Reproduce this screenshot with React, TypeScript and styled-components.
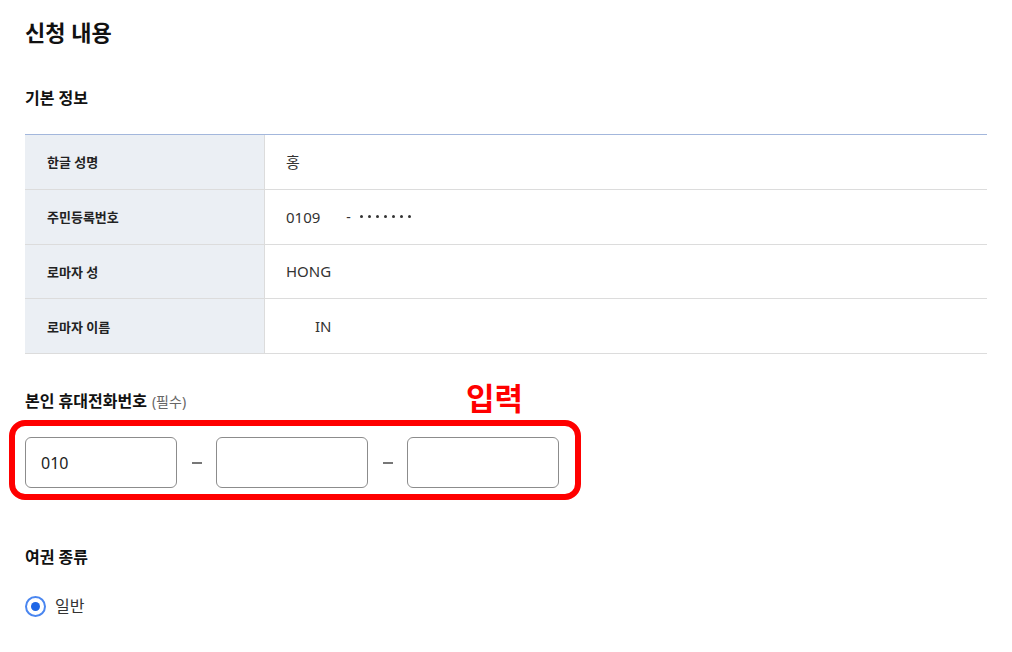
import React from "react";
import styled, { createGlobalStyle } from "styled-components";

const GlobalStyle = createGlobalStyle`
  html, body {
    margin: 0;
    padding: 0;
    background: #ffffff;
    font-family: "Noto Sans", "Noto Sans CJK KR", sans-serif;
    color: #222;
  }
  * { box-sizing: border-box; }
`;

const Page = styled.div`
  padding: 17px 25px 40px 25px;
  display: flex;
  flex-direction: column;
`;

const Title = styled.h2`
  margin: 0;
  font-size: 22px;
  line-height: 30px;
  font-weight: 700;
  color: #111;
`;

const SectionTitle = styled.h3<{ $mt: number }>`
  margin: ${(p) => p.$mt}px 0 0 0;
  font-size: 16px;
  line-height: 24px;
  font-weight: 700;
  color: #111;
`;

const InfoTable = styled.div`
  margin-top: 24px;
  border-top: 1px solid #a3b7dc;
  display: flex;
  flex-direction: column;
`;

const Row = styled.div`
  display: grid;
  grid-template-columns: 240px 1fr;
  height: 54.75px;
  border-bottom: 1px solid #dcdcdc;
`;

const LabelCell = styled.div`
  background: #ebeff4;
  border-right: 1px solid #dcdcdc;
  display: flex;
  align-items: center;
  padding-left: 22px;
  font-size: 13px;
  font-weight: 700;
  color: #222;
`;

const ValueCell = styled.div<{ $indent?: number }>`
  display: flex;
  align-items: center;
  padding-left: ${(p) => 21 + (p.$indent ?? 0)}px;
  font-size: 15px;
  color: #333;
`;

const Masked = styled.span`
  margin-left: 26px;
  display: inline-flex;
  align-items: center;
  gap: 5px;
`;

const Dot = styled.span`
  width: 3px;
  height: 3px;
  border-radius: 50%;
  background: #333;
`;

const Hyphen = styled.span`
  margin-right: 4px;
  font-size: 14px;
`;

const FieldLabel = styled.div`
  margin-top: 36px;
  display: flex;
  align-items: baseline;
  gap: 5px;
  font-size: 16px;
  line-height: 22px;
  font-weight: 700;
  color: #111;
`;

const Required = styled.span`
  font-size: 14px;
  font-weight: 400;
  color: #666;
`;

const Annotated = styled.div`
  position: relative;
  margin-top: 24px;
  width: 535px;
`;

const Highlight = styled.div`
  position: absolute;
  top: -17px;
  left: -16px;
  right: -21px;
  bottom: -12px;
  border: 6px solid #ff0000;
  border-radius: 16px;
  pointer-events: none;
`;

const Note = styled.span`
  position: absolute;
  top: -58px;
  left: 441px;
  font-family: "Noto Sans CJK KR", sans-serif;
  font-size: 31px;
  line-height: 36px;
  font-weight: 700;
  color: #ff0000;
  letter-spacing: 0;
  white-space: nowrap;
`;

const PhoneRow = styled.div`
  display: flex;
  align-items: center;
`;

const PhoneInput = styled.input`
  width: 152px;
  height: 51px;
  border: 1px solid #8c8c8c;
  border-radius: 6px;
  padding: 0 15px;
  font-family: "Noto Sans", "Noto Sans CJK KR", sans-serif;
  font-size: 16px;
  color: #222;
  background: #fff;
  outline: none;
`;

const Dash = styled.span`
  width: 39px;
  display: flex;
  justify-content: center;
  &::before {
    content: "";
    display: block;
    width: 10px;
    height: 2px;
    background: #777;
  }
`;

const RadioRow = styled.label`
  margin-top: 25px;
  display: flex;
  align-items: center;
  gap: 9px;
  font-size: 16px;
  line-height: 24px;
  color: #333;
`;

const RadioOuter = styled.span`
  width: 21px;
  height: 21px;
  border-radius: 50%;
  border: 2px solid #4a86f0;
  display: flex;
  align-items: center;
  justify-content: center;
  &::after {
    content: "";
    width: 9px;
    height: 9px;
    border-radius: 50%;
    background: #1e66e6;
  }
`;

const rows: { label: string; value: React.ReactNode; indent?: number }[] = [
  { label: "한글 성명", value: "홍" },
  {
    label: "주민등록번호",
    value: (
      <>
        0109
        <Masked>
          <Hyphen>-</Hyphen>
          {Array.from({ length: 7 }).map((_, i) => (
            <Dot key={i} />
          ))}
        </Masked>
      </>
    ),
  },
  { label: "로마자 성", value: "HONG" },
  { label: "로마자 이름", value: "IN", indent: 29 },
];

export default function App() {
  return (
    <>
      <GlobalStyle />
      <Page>
        <Title>신청 내용</Title>
        <SectionTitle $mt={39}>기본 정보</SectionTitle>
        <InfoTable>
          {rows.map((r) => (
            <Row key={r.label}>
              <LabelCell>{r.label}</LabelCell>
              <ValueCell $indent={r.indent}>{r.value}</ValueCell>
            </Row>
          ))}
        </InfoTable>

        <FieldLabel>
          본인 휴대전화번호<Required>(필수)</Required>
        </FieldLabel>
        <Annotated>
          <Note>입력</Note>
          <Highlight />
          <PhoneRow>
            <PhoneInput defaultValue="010" />
            <Dash />
            <PhoneInput />
            <Dash />
            <PhoneInput />
          </PhoneRow>
        </Annotated>

        <SectionTitle $mt={57}>여권 종류</SectionTitle>
        <RadioRow>
          <RadioOuter />
          일반
        </RadioRow>
      </Page>
    </>
  );
}
